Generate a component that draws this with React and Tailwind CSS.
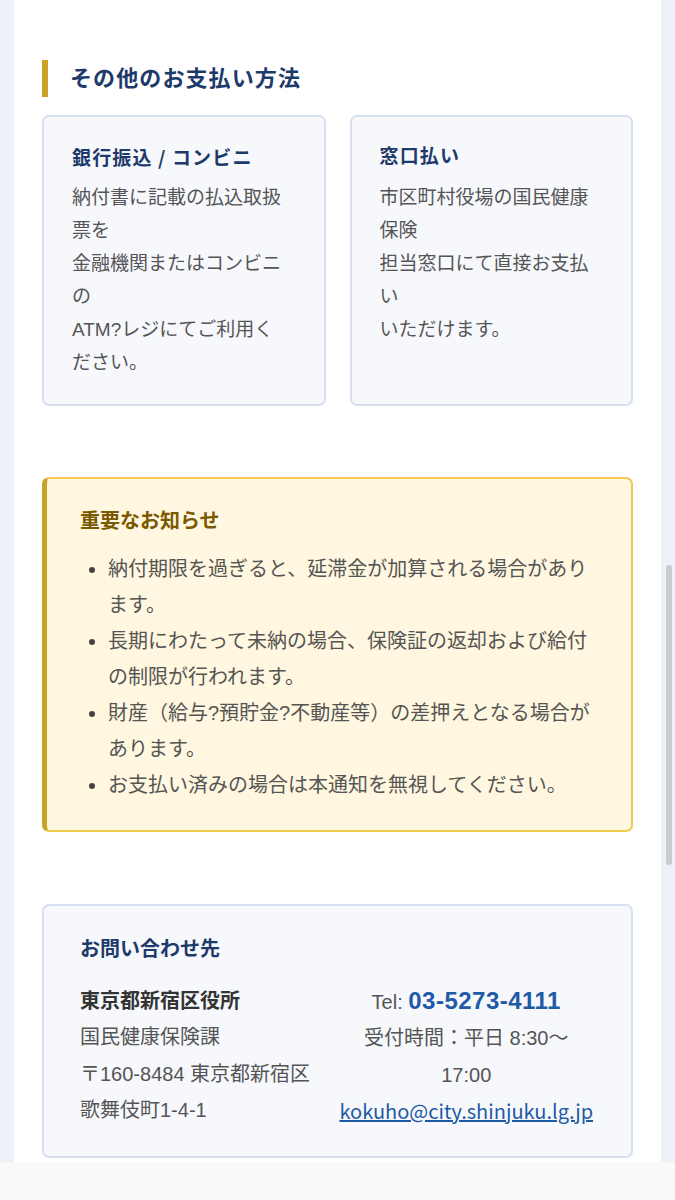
export default function App() {
  const font = { fontFamily: '"Liberation Sans", "Noto Sans CJK JP", sans-serif' };

  return (
    <div
      className="relative w-[675px] h-[1200px] overflow-hidden bg-[#eef2f8] flex flex-col"
      style={font}
    >
      {/* Panel */}
      <div className="flex-1 mx-[14px] bg-white px-[28px] pt-[60px] overflow-hidden">
        {/* Heading */}
        <h2 className="border-l-[6px] border-[#c9a227] pl-[22px] h-[37px] leading-[37px] text-[22px] font-bold tracking-[0.05em] text-[#1e3a6b]">
          その他のお支払い方法
        </h2>

        {/* Payment cards */}
        <div className="grid grid-cols-2 gap-[24px] mt-[18px]">
          <div className="bg-[#f6f8fc] border-2 border-[#d6e0ef] rounded-[7px] pt-[26px] pb-[25px] px-[28px]">
            <h3 className="h-[28px] text-[19px] leading-[28px] font-bold tracking-[0.06em] text-[#1e3a6b]">
              銀行振込<span className="font-['Noto_Sans_CJK_JP',sans-serif]"> / </span>コンビニ
            </h3>
            <p className="mt-[10px] text-[19px] leading-[33px] text-[#555]">
              納付書に記載の払込取扱票を
              <br />
              金融機関またはコンビニの
              <br />
              ATM?レジにてご利用く
              <br />
              ださい。
            </p>
          </div>
          <div className="bg-[#f6f8fc] border-2 border-[#d6e0ef] rounded-[7px] pt-[26px] pb-[25px] px-[28px]">
            <h3 className="h-[28px] text-[19px] leading-[28px] font-bold tracking-[0.06em] text-[#1e3a6b]">
              窓口払い
            </h3>
            <p className="mt-[10px] text-[19px] leading-[33px] text-[#555]">
              市区町村役場の国民健康保険
              <br />
              担当窓口にて直接お支払い
              <br />
              いただけます。
            </p>
          </div>
        </div>

        {/* Important notice */}
        <div className="mt-[71px] bg-[#fff7df] border-2 border-[#f2c94c] border-l-[5px] border-l-[#c9a227] rounded-[7px] pt-[27px] pb-[27px] pl-[33px] pr-[35px]">
          <h3 className="text-[20px] leading-[30px] font-bold text-[#7a5800]">
            重要なお知らせ
          </h3>
          <ul className="mt-[15px] list-disc pl-[28px] text-[20px] leading-[36px] text-[#555] marker:text-[#444]">
            <li>納付期限を過ぎると、延滞金が加算される場合があります。</li>
            <li>長期にわたって未納の場合、保険証の返却および給付の制限が行われます。</li>
            <li>財産（給与?預貯金?不動産等）の差押えとなる場合があります。</li>
            <li>お支払い済みの場合は本通知を無視してください。</li>
          </ul>
        </div>

        {/* Contact */}
        <div className="mt-[72px] bg-[#f6f8fc] border-2 border-[#d6e0ef] rounded-[7px] pt-[28px] pb-[26px] px-[36px]">
          <h3 className="text-[20px] leading-[30px] font-bold text-[#1e3a6b]">
            お問い合わせ先
          </h3>
          <div className="mt-[19px] grid grid-cols-2 text-[20px] leading-[36.3px] text-[#555]">
            <div>
              <p className="font-bold text-[#333]">東京都新宿区役所</p>
              <p>国民健康保険課</p>
              <p>〒160-8484 東京都新宿区</p>
              <p>歌舞伎町1-4-1</p>
            </div>
            <div className="text-center">
              <p>
                Tel:{" "}
                <span className="text-[24px] font-bold tracking-[0.02em] text-[#1f5aa6]">03-5273-4111</span>
              </p>
              <p>
                受付時間：平日 8:30〜
                <br />
                17:00
              </p>
              <p>
                <a
                  href="#"
                  className="text-[#1f5aa6] underline font-['Noto_Sans_CJK_JP',sans-serif]"
                >
                  kokuho@city.shinjuku.lg.jp
                </a>
              </p>
            </div>
          </div>
        </div>
      </div>

      {/* Bottom browser bar */}
      <div className="h-[38px] bg-[#f9f9f9] shrink-0" />

      {/* Scrollbar */}
      <div className="absolute right-[3px] top-[565px] w-[6px] h-[300px] rounded-full bg-[#c9ccd1]" />
    </div>
  );
}
